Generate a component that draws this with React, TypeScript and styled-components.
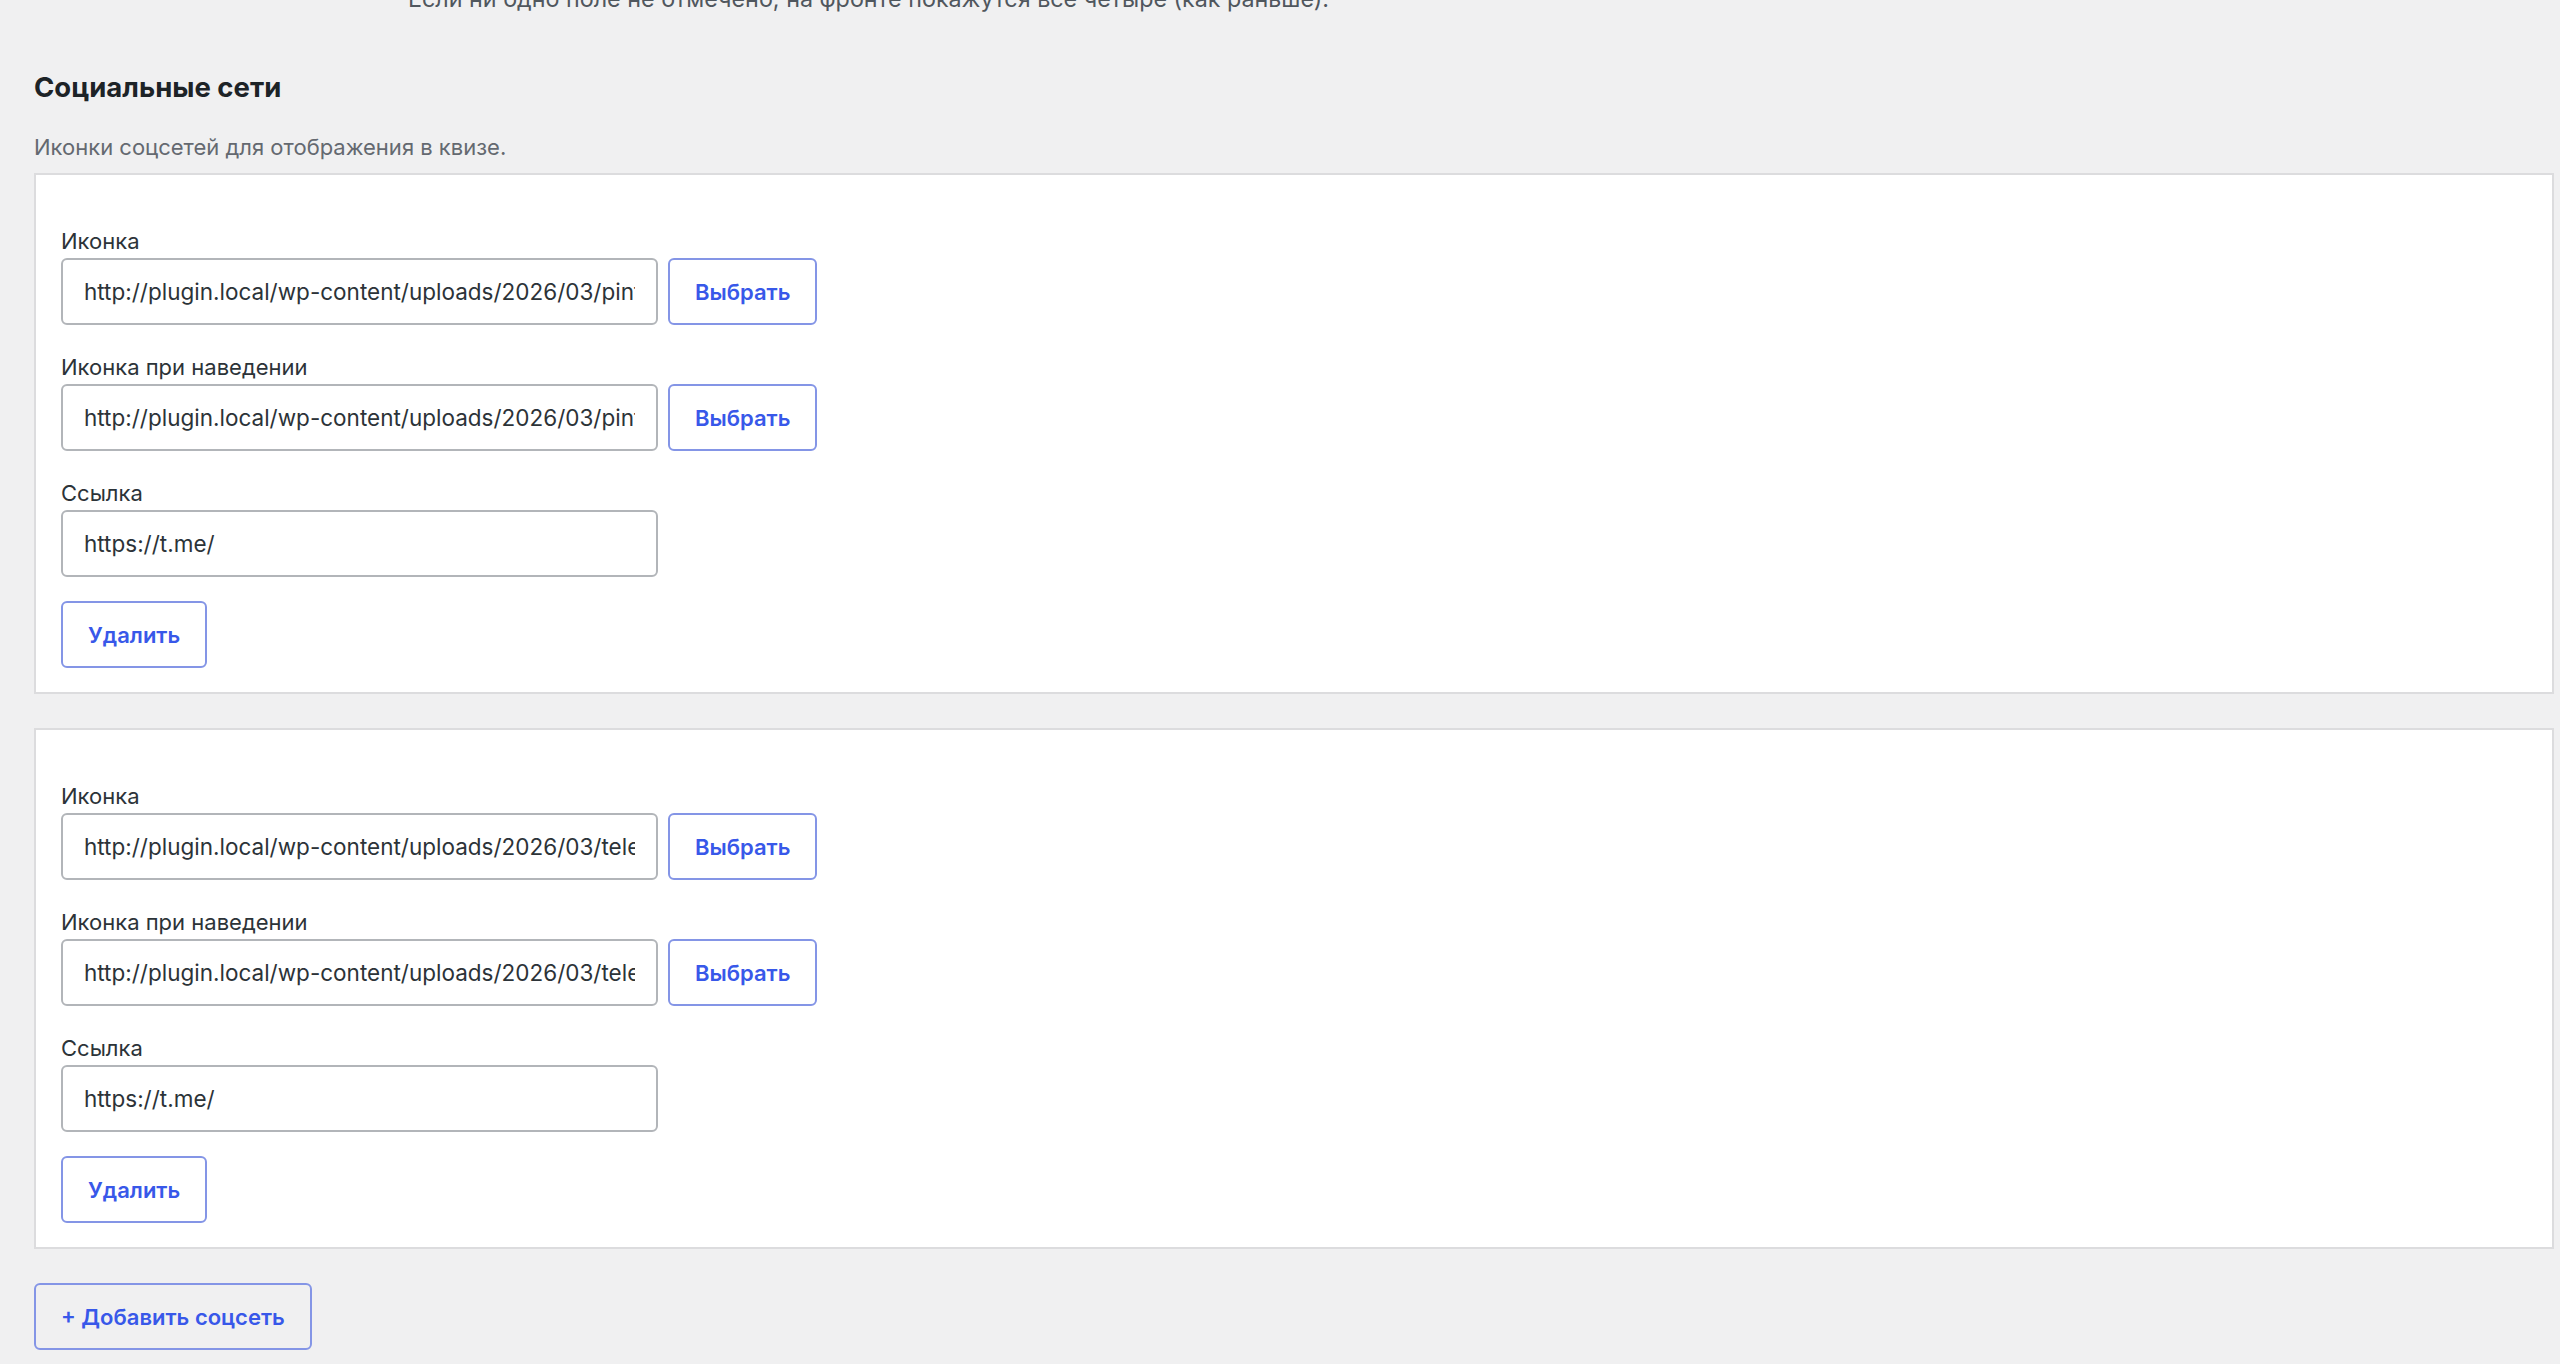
import React from 'react';
import styled, { createGlobalStyle } from 'styled-components';

const GlobalStyle = createGlobalStyle`
    html, body {
        margin: 0;
        padding: 0;
        background: #f0f0f1;
        font-family: Inter, "Noto Sans", sans-serif;
        color: #2c3338;
    }
    * {
        box-sizing: border-box;
    }
`;

const Page = styled.div`
    padding: 0 6px 11px 34px;
    overflow: hidden;
`;

const Note = styled.p`
    margin: -15px 0 0 374px;
    font-size: 23.3px;
    line-height: 28px;
    color: #50575e;
`;

const Heading = styled.h2`
    margin: 57px 0 0;
    font-size: 27.5px;
    line-height: 34px;
    font-weight: 700;
    color: #1d2327;
`;

const Description = styled.p`
    margin: 30px 0 0;
    font-size: 22px;
    line-height: 26px;
    color: #646970;
`;

const List = styled.div`
    display: flex;
    flex-direction: column;
    gap: 34px;
    margin-top: 13px;
`;

const Card = styled.div`
    background: #fff;
    border: 2px solid #dcdcde;
    padding: 52px 25px 24px;
    display: flex;
    flex-direction: column;
    align-items: flex-start;
`;

const Field = styled.div`
    display: flex;
    flex-direction: column;
    margin-bottom: 28px;
    &:last-of-type {
        margin-bottom: 24px;
    }
`;

const Label = styled.label`
    font-size: 22px;
    line-height: 28px;
    margin-bottom: 3px;
    color: #2c3338;
`;

const Row = styled.div`
    display: flex;
    align-items: center;
    gap: 10px;
`;

const TextInput = styled.input`
    width: 597px;
    height: 67px;
    padding: 0 21px;
    border: 2px solid #b2b5b9;
    border-radius: 6px;
    background: #fff;
    font-family: inherit;
    font-size: 22.5px;
    color: #2c3338;
    outline: none;
`;

const Button = styled.button`
    height: 67px;
    padding: 0 25px;
    border: 2px solid #8495e6;
    border-radius: 6px;
    background: ${(p: { $ghost?: boolean }) => (p.$ghost ? '#f0f0f1' : '#fff')};
    color: #3858e9;
    font-family: inherit;
    font-size: 22px;
    font-weight: 600;
    cursor: pointer;
    flex-shrink: 0;
`;

const AddButton = styled(Button)`
    margin-top: 34px;
`;

type Social = { icon: string; hover: string; link: string };

const socials: Social[] = [
    {
        icon: 'http://plugin.local/wp-content/uploads/2026/03/pinterest.svg',
        hover: 'http://plugin.local/wp-content/uploads/2026/03/pinterest-hover.svg',
        link: 'https://t.me/',
    },
    {
        icon: 'http://plugin.local/wp-content/uploads/2026/03/telegram.svg',
        hover: 'http://plugin.local/wp-content/uploads/2026/03/telegram-hover.svg',
        link: 'https://t.me/',
    },
];

const SocialCard = ({ item }: { item: Social }) => (
    <Card>
        <Field>
            <Label>Иконка</Label>
            <Row>
                <TextInput type="text" defaultValue={item.icon} />
                <Button>Выбрать</Button>
            </Row>
        </Field>
        <Field>
            <Label>Иконка при наведении</Label>
            <Row>
                <TextInput type="text" defaultValue={item.hover} />
                <Button>Выбрать</Button>
            </Row>
        </Field>
        <Field>
            <Label>Ссылка</Label>
            <TextInput type="text" defaultValue={item.link} />
        </Field>
        <Button>Удалить</Button>
    </Card>
);

const App = () => (
    <>
        <GlobalStyle />
        <Page>
            <Note>Если ни одно поле не отмечено, на фронте покажутся все четыре (как раньше).</Note>
            <Heading>Социальные сети</Heading>
            <Description>Иконки соцсетей для отображения в квизе.</Description>
            <List>
                {socials.map((s, i) => (
                    <SocialCard key={i} item={s} />
                ))}
            </List>
            <AddButton $ghost>+ Добавить соцсеть</AddButton>
        </Page>
    </>
);

export default App;
